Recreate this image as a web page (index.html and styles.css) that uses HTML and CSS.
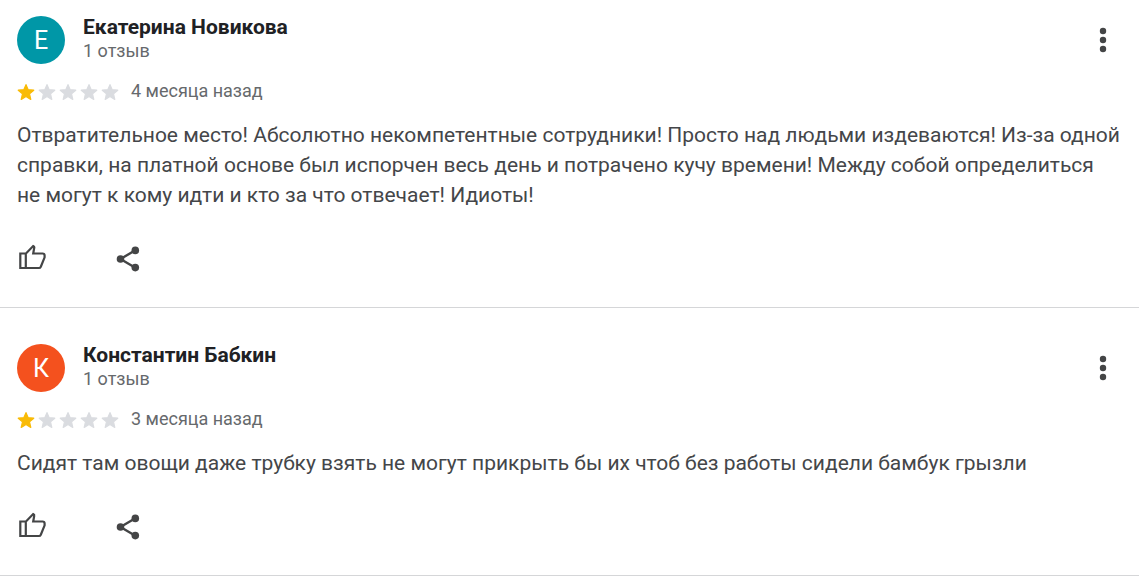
FILE: index.html
```html
<!DOCTYPE html>
<html lang="ru">
<head>
  <meta charset="UTF-8">
  <title>Отзывы</title>
  <meta name="viewport" content="width=device-width, initial-scale=1.0">
  <link rel="stylesheet" href="styles.css">
</head>
<body>
  <svg class="sprite" aria-hidden="true">
    <symbol id="star" viewBox="0 0 20 20">
      <path d="M10 1.8l2.4 5.7 6.2.5-4.7 4.1 1.4 6.1-5.3-3.2-5.3 3.2 1.4-6.1L1.4 8l6.2-.5z" stroke="currentColor" stroke-width="1.4" stroke-linejoin="round"/>
    </symbol>
    <symbol id="more" viewBox="0 0 30 30">
      <circle cx="15" cy="6" r="3.2"/>
      <circle cx="15" cy="15" r="3.2"/>
      <circle cx="15" cy="24" r="3.2"/>
    </symbol>
    <symbol id="like" viewBox="0 0 30 30">
      <path d="M3.3 9.5H9L16.2 2Q17.6 2.6 17.2 4L16.2 9.5H25.6Q27.6 9.5 27.6 11.4V13.4L23.8 22.7Q23.2 24 22 24H3.3zM8.8 9.5V24" fill="none" stroke="currentColor" stroke-width="2.2"/>
    </symbol>
    <symbol id="share" viewBox="0 0 30 30">
      <path d="M22.3 6.3L7.5 15l14.8 8.7" fill="none" stroke="currentColor" stroke-width="2.4"/>
      <circle cx="22.3" cy="6.4" r="3.8"/>
      <circle cx="7.5" cy="15" r="3.8"/>
      <circle cx="22.3" cy="23.6" r="3.8"/>
    </symbol>
  </svg>

  <main>
    <article class="review">
      <header class="author">
        <div class="avatar teal">Е</div>
        <div class="info">
          <h2 class="name">Екатерина Новикова</h2>
          <p class="count">1 отзыв</p>
        </div>
        <button class="more" aria-label="Ещё"><svg class="icon"><use href="#more"/></svg></button>
      </header>
      <div class="rating">
        <div class="stars" role="img" aria-label="1 из 5">
          <svg class="star on"><use href="#star"/></svg>
          <svg class="star"><use href="#star"/></svg>
          <svg class="star"><use href="#star"/></svg>
          <svg class="star"><use href="#star"/></svg>
          <svg class="star"><use href="#star"/></svg>
        </div>
        <span class="date">4 месяца назад</span>
      </div>
      <p class="text">Отвратительное место! Абсолютно некомпетентные сотрудники! Просто над людьми издеваются! Из-за одной справки, на платной основе был испорчен весь день и потрачено кучу времени! Между собой определиться не могут к кому идти и кто за что отвечает! Идиоты!</p>
      <div class="actions">
        <button aria-label="Нравится"><svg class="icon"><use href="#like"/></svg></button>
        <button aria-label="Поделиться"><svg class="icon"><use href="#share"/></svg></button>
      </div>
    </article>

    <article class="review">
      <header class="author">
        <div class="avatar orange">К</div>
        <div class="info">
          <h2 class="name">Константин Бабкин</h2>
          <p class="count">1 отзыв</p>
        </div>
        <button class="more" aria-label="Ещё"><svg class="icon"><use href="#more"/></svg></button>
      </header>
      <div class="rating">
        <div class="stars" role="img" aria-label="1 из 5">
          <svg class="star on"><use href="#star"/></svg>
          <svg class="star"><use href="#star"/></svg>
          <svg class="star"><use href="#star"/></svg>
          <svg class="star"><use href="#star"/></svg>
          <svg class="star"><use href="#star"/></svg>
        </div>
        <span class="date">3 месяца назад</span>
      </div>
      <p class="text">Сидят там овощи даже трубку взять не могут прикрыть бы их чтоб без работы сидели бамбук грызли</p>
      <div class="actions">
        <button aria-label="Нравится"><svg class="icon"><use href="#like"/></svg></button>
        <button aria-label="Поделиться"><svg class="icon"><use href="#share"/></svg></button>
      </div>
    </article>
  </main>
</body>
</html>
```

FILE: styles.css
```css
body { margin: 0; background: #fff; color: #444649; font-family: Roboto, sans-serif; }
h2, p { margin: 0; }
button { padding: 0; border: none; background: none; color: #444546; cursor: pointer; }
.sprite { display: none; }
.icon { display: block; width: 30px; height: 30px; fill: currentColor; }

.review { padding: 36px 17px 33px; border-bottom: 1px solid #d5d6d8; }
.review:first-child { padding-top: 16px; }

.author { display: flex; align-items: center; }
.avatar { width: 48px; height: 48px; margin-right: 18px; border-radius: 50%; color: #fff; font-size: 25px; line-height: 50px; text-align: center; }
.teal { background: #0097a7; }
.orange { background: #f4511e; }
.info { flex: 1; height: 48px; }
.name { color: #202124; font-size: 21px; font-weight: 700; line-height: 22px; }
.count { color: #66696c; font-size: 18px; line-height: 26px; }
.more { display: flex; justify-content: center; width: 38px; }

.rating { display: flex; align-items: center; margin-top: 16px; }
.stars { display: flex; gap: 3px; margin-right: 12px; padding-top: 2px; }
.star { width: 18px; height: 18px; color: #dadce0; fill: currentColor; }
.star.on { color: #f9bb07; }
.date { color: #66696c; font-size: 18px; line-height: 22px; }

.text { margin-top: 18px; font-size: 21px; line-height: 30px; }
.actions { display: flex; gap: 66px; margin-top: 34px; }
```
